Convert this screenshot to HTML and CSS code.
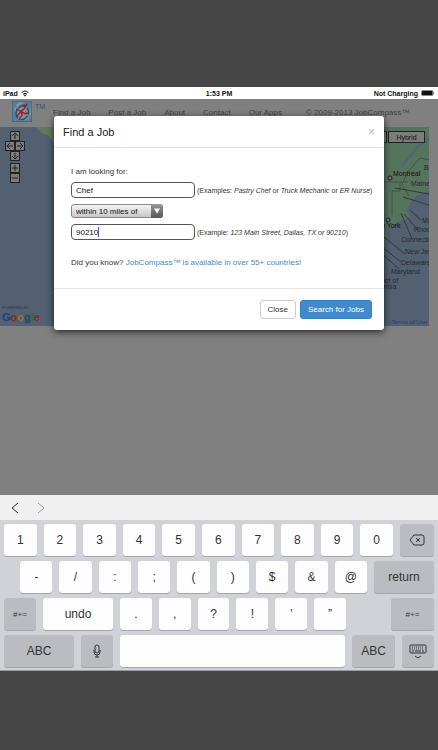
FILE: index.html
```html
<!DOCTYPE html>
<html lang="en">
<head>
    <meta charset="UTF-8">
    <meta name="viewport" content="width=device-width, initial-scale=1.0">
    <title>JobCompass - Find a Job</title>
    <link rel="stylesheet" href="styles.css">
</head>
<body>
    <div class="status-bar">
        <div class="status-left">
            <span>iPad</span>
            <svg width="8" height="7" viewBox="0 0 16 13" fill="none" stroke="#111" stroke-width="2">
                <path d="M1 5Q8-2 15 5M4 8Q8 4 12 8"/>
                <path d="M6 10L8 12L10 10Q8 8 6 10Z" fill="#111" stroke-width="1"/>
            </svg>
        </div>
        <div class="status-time">1:53 PM</div>
        <div class="status-right">
            <span>Not Charging</span>
            <svg width="14" height="6" viewBox="0 0 28 12">
                <rect x="1" y="1" width="23" height="10" rx="2" fill="none" stroke="#111"/>
                <rect x="2" y="2" width="21" height="8" rx="1" fill="#111"/>
                <path d="M25 4Q28 6 25 8Z" fill="#111"/>
            </svg>
        </div>
    </div>

    <main class="page">
        <header class="site-header">
            <a class="logo" href="#" aria-label="JobCompass">
                <svg width="20" height="21" viewBox="0 0 60 63">
                    <rect x="1" y="1" width="58" height="61" fill="#57809a" stroke="#2a6489" stroke-width="2"/>
                    <path d="M20 4H38L20 14L8 34V18ZM56 18V46L42 58H28L46 46Z" fill="#83959f"/>
                    <ellipse cx="31" cy="35" rx="18" ry="21" transform="rotate(25 31 35)" fill="#8b9499" stroke="#1e5b83" stroke-width="5"/>
                    <path d="M5 10L24 28L34 24L52 6L40 30L54 48L35 38L16 58L24 34Z" fill="#8b9499" stroke="#2a6489" stroke-width="1"/>
                    <path d="M46 8L38 22L26 32L12 48M12 24L26 30L38 38L50 36M28 31L30 43L22 52" fill="none" stroke="#a3181f" stroke-width="4"/>
                    <circle cx="37" cy="14" r="4" fill="#a3181f"/>
                </svg>
                <span>TM</span>
            </a>
            <nav class="site-nav">
                <a href="#">Find a Job</a>
                <a href="#">Post a Job</a>
                <a href="#">About</a>
                <a href="#">Contact</a>
                <a href="#">Our Apps</a>
                <span>© 2009-2013 JobCompass™</span>
            </nav>
        </header>

        <section class="map">
            <svg class="map-art" viewBox="0 0 429 199" preserveAspectRatio="xMaxYMin slice">
                <rect width="429" height="199" fill="#526071"/>
                <path d="M36 0L42 6L48 8L54 16L80 60H429V0Z" fill="#5a735f"/>
                <path d="M360 0H429V64L418 68L410 75L407 84L411 90L403 93L394 97L388 103L384 120L374 130H360Z" fill="#56735c"/>
                <path d="M36 0L42 6L48 8L54 16V0Z" fill="#66785a"/>
                <path d="M429 14L419 20L411 30L403 39L399 42L406 32L416 20L429 11Z" fill="#4f657b"/>
                <path d="M429 33L420 31L413 39L407 46L402 58L409 69M384 55H408M400 56V64H392V88" fill="none" stroke="#43544a"/>
                <path d="M395 61L429 67M403 70L429 78M410 83L421 93M404 87L418 103M401 86L412 112M375 103L405 127M372 112L401 135M372 118L399 142" fill="none" stroke="#303940"/>
                <circle cx="390" cy="51" r="2" fill="#777" stroke="#222"/>
                <circle cx="388" cy="93" r="2" fill="#777" stroke="#222"/>
                <g class="map-labels">
                    <text x="393" y="49" class="city">Montreal</text>
                    <text x="424" y="43">Bangor</text>
                    <text x="411" y="59">Maine</text>
                    <text x="371" y="101" class="city">New York</text>
                    <text x="422" y="96">Massachusetts</text>
                    <text x="414" y="105">Rhode Island</text>
                    <text x="401" y="115">Connecticut</text>
                    <text x="405" y="127">New Jersey</text>
                    <text x="401" y="138">Delaware</text>
                    <text x="391" y="147">Maryland</text>
                    <text x="369" y="156">District of</text>
                    <text x="367" y="162">Columbia</text>
                </g>
            </svg>
            <div class="pan-controls">
                <button class="pan-up" aria-label="Pan up"><svg viewBox="0 0 8 8"><path d="M4 7V1M1 4L4 1L7 4"/></svg></button>
                <button class="pan-left" aria-label="Pan left"><svg viewBox="0 0 8 8"><path d="M7 4H1M4 1L1 4L4 7"/></svg></button>
                <button class="pan-right" aria-label="Pan right"><svg viewBox="0 0 8 8"><path d="M1 4H7M4 1L7 4L4 7"/></svg></button>
                <button class="pan-down" aria-label="Pan down"><svg viewBox="0 0 8 8"><path d="M4 1V7M1 4L4 7L7 4"/></svg></button>
                <button class="zoom-in" aria-label="Zoom in"><svg viewBox="0 0 8 8"><path d="M4 1V7M1 4H7"/></svg></button>
                <button class="zoom-out" aria-label="Zoom out"><svg viewBox="0 0 8 8"><path d="M1 4H7"/></svg></button>
            </div>
            <div class="map-types">
                <button aria-label="Satellite"></button>
                <button>Hybrid</button>
            </div>
            <div class="google">
                <small>POWERED BY</small>
                <div class="google-name"><span class="g-blue">G</span><span class="g-red">o</span><span class="g-yellow">o</span><span class="g-blue">g</span><span class="g-green">l</span><span class="g-red">e</span></div>
            </div>
            <a class="terms" href="#">- Terms of Use</a>
        </section>

        <form class="modal" role="dialog" aria-labelledby="modal-title">
            <div class="modal-header">
                <h1 id="modal-title">Find a Job</h1>
                <button type="button" class="dismiss" aria-label="Dismiss">×</button>
            </div>
            <div class="modal-body">
                <label for="job">I am looking for:</label>
                <div class="field">
                    <input type="text" id="job" value="Chef">
                    <span class="hint">(Examples: <em>Pastry Chef</em> or <em>Truck Mechanic</em> or <em>ER Nurse</em>)</span>
                </div>
                <div class="select-wrap">
                    <select aria-label="Distance">
                        <option>within 10 miles of</option>
                    </select>
                    <svg class="select-arrow" viewBox="0 0 12 13"><path d="M3 4H9L6 9Z" fill="#fff"/></svg>
                </div>
                <div class="field">
                    <input type="text" aria-label="Location" value="90210">
                    <span class="caret"></span>
                    <span class="hint">(Example: <em>123 Main Street, Dallas, TX or 90210</em>)</span>
                </div>
                <p class="note">Did you know? <a href="#">JobCompass™ is available in over 55+ countries!</a></p>
            </div>
            <div class="modal-footer">
                <button type="button" class="btn">Close</button>
                <button type="button" class="btn btn-primary">Search for Jobs</button>
            </div>
        </form>
    </main>

    <section class="keyboard">
        <div class="key-toolbar">
            <button aria-label="Previous field"><svg width="8" height="12" viewBox="0 0 8 12"><path d="M7 1L1 6L7 11"/></svg></button>
            <button class="disabled" aria-label="Next field"><svg width="8" height="12" viewBox="0 0 8 12"><path d="M1 1L7 6L1 11"/></svg></button>
        </div>
        <div class="keys">
            <div class="key-row">
                <button class="key">1</button>
                <button class="key">2</button>
                <button class="key">3</button>
                <button class="key">4</button>
                <button class="key">5</button>
                <button class="key">6</button>
                <button class="key">7</button>
                <button class="key">8</button>
                <button class="key">9</button>
                <button class="key">0</button>
                <button class="key dark w-delete" aria-label="Delete">
                    <svg width="16" height="12" viewBox="0 0 16 12" fill="none" stroke="#333"><path d="M5 1H13Q15 1 15 3V9Q15 11 13 11H5L1 6ZM7 4L11 8M11 4L7 8"/></svg>
                </button>
            </div>
            <div class="key-row indent">
                <button class="key">-</button>
                <button class="key">/</button>
                <button class="key">:</button>
                <button class="key">;</button>
                <button class="key">(</button>
                <button class="key">)</button>
                <button class="key">$</button>
                <button class="key">&amp;</button>
                <button class="key">@</button>
                <button class="key dark w-return">return</button>
            </div>
            <div class="key-row">
                <button class="key dark small w-one">#+=</button>
                <button class="key w-wide">undo</button>
                <button class="key">.</button>
                <button class="key">,</button>
                <button class="key">?</button>
                <button class="key">!</button>
                <button class="key">’</button>
                <button class="key">”</button>
                <button class="key dark small w-mid push">#+=</button>
            </div>
            <div class="key-row">
                <button class="key dark w-wide">ABC</button>
                <button class="key dark w-one" aria-label="Dictate">
                    <svg width="8" height="14" viewBox="0 0 8 14" fill="none" stroke="#333"><rect x="2" y="1" width="4" height="8" rx="2"/><path d="M1 6V8Q1 11 4 11Q7 11 7 8V6M4 11V13M2 13H6"/></svg>
                </button>
                <button class="key" aria-label="Space"></button>
                <button class="key dark w-mid">ABC</button>
                <button class="key dark w-one" aria-label="Hide keyboard">
                    <svg width="18" height="16" viewBox="0 0 18 16" fill="none" stroke="#333"><rect x="1" y="2" width="16" height="8" rx="1"/><path d="M3 4H15M3 6H15" stroke-dasharray="1 1"/><path d="M3 8H5M6 8H12M13 8H15M6 13L9 15L12 13"/></svg>
                </button>
            </div>
        </div>
    </section>
</body>
</html>
```

FILE: styles.css
```css
* {
    box-sizing: border-box;
}
body {
    margin: 0;
    padding: 87px 0 79px;
    background-color: #464646;
    font-family: "Liberation Sans", Arial, sans-serif;
    font-size: 8px;
    color: #333;
}
button, input, select {
    margin: 0;
    padding: 0;
    font: inherit;
    color: inherit;
}
a {
    text-decoration: none;
}

/* Status bar */
.status-bar {
    display: grid;
    grid-template-columns: 1fr auto 1fr;
    align-items: center;
    height: 12px;
    padding: 0 3px;
    background-color: #fff;
    color: #111;
    font-size: 7px;
    font-weight: bold;
}
.status-left, .status-right {
    display: flex;
    align-items: center;
    gap: 3px;
}
.status-right {
    justify-content: flex-end;
}

/* Page behind the dialog */
.page {
    position: relative;
    height: 396px;
    padding-right: 9px;
    background-color: #808080;
}
.site-header {
    display: flex;
    height: 28px;
    padding: 2px 0 0 12px;
}
.logo {
    display: flex;
    gap: 3px;
    width: 41px;
    color: #2b526c;
}
.logo span {
    padding-top: 2px;
    font-size: 7px;
}
.site-nav {
    display: flex;
    gap: 18px;
    padding-top: 7px;
    color: #404040;
    white-space: nowrap;
}
.site-nav a {
    color: inherit;
}
.site-nav span {
    padding-left: 6px;
}
.map {
    position: relative;
    height: 199px;
    overflow: hidden;
    background-color: #526071;
}
.map-art {
    display: block;
    width: 100%;
    height: 100%;
}
.map-labels {
    font-size: 7px;
    fill: #26292c;
}
.map-labels .city {
    fill: #111;
}
.pan-controls {
    position: absolute;
    left: 5px;
    top: 4px;
    display: grid;
    grid-template-columns: repeat(4, 5px);
    grid-template-rows: 10px 10px 12px 10px 10px;
    row-gap: 0;
}
.pan-controls button {
    width: 10px;
    height: 10px;
    border: 1px solid #222;
    background-color: #7c7c7c;
}
.pan-controls svg {
    display: block;
    width: 8px;
    height: 8px;
    fill: none;
    stroke: #222;
}
.pan-up, .pan-down, .zoom-in, .zoom-out {
    grid-column: 2 / 4;
}
.pan-left {
    grid-column: 1 / 3;
    grid-row: 2;
}
.pan-right {
    grid-column: 3 / 5;
    grid-row: 2;
}
.map-types {
    position: absolute;
    top: 4px;
    right: 4px;
    display: flex;
    gap: 1px;
}
.map-types button {
    width: 37px;
    height: 12px;
    border: 1px solid #222;
    background-color: #7d7d7d;
    color: #111;
    font-size: 7px;
}
.google {
    position: absolute;
    left: 2px;
    bottom: 2px;
}
.google small {
    display: block;
    font-size: 4px;
    line-height: 5px;
    color: #30363d;
}
.google-name {
    font-size: 11px;
    font-weight: bold;
    line-height: 14px;
}
.g-blue {
    color: #203f83;
}
.g-red {
    color: #8c2529;
}
.g-yellow {
    color: #8f7922;
}
.g-green {
    color: #28713a;
}
.terms {
    position: absolute;
    right: 2px;
    bottom: 1px;
    color: #303b73;
    font-size: 6px;
}

/* Dialog */
.modal {
    position: absolute;
    top: 17px;
    left: 54px;
    right: 54px;
    border-radius: 3px;
    background-color: #fff;
    box-shadow: 0 2px 7px rgba(0, 0, 0, 0.7);
}
.modal-header {
    display: flex;
    align-items: center;
    justify-content: space-between;
    height: 32px;
    padding: 0 9px;
    border-bottom: 1px solid #e5e5e5;
}
.modal-header h1 {
    margin: 0;
    font-size: 11px;
    font-weight: normal;
    color: #222;
}
.dismiss {
    border: none;
    background: none;
    color: #bbb;
    font-size: 12px;
}
.modal-body {
    padding: 19px 17px 20px;
}
.modal-body label {
    display: block;
    height: 15px;
    line-height: 10px;
}
.field {
    position: relative;
    display: flex;
    align-items: center;
    gap: 2px;
}
.field input {
    flex: none;
    width: 124px;
    height: 16px;
    padding: 0 4px;
    border: 1px solid #555;
    border-radius: 4px;
    background-color: #fff;
    color: #111;
}
.caret {
    position: absolute;
    left: 27px;
    top: 3px;
    width: 1px;
    height: 10px;
    background-color: #3b62d8;
}
.hint {
    font-size: 7px;
    white-space: nowrap;
}
.select-wrap {
    position: relative;
    width: 92px;
    height: 14px;
    margin: 6px 0;
}
.select-wrap select {
    display: block;
    width: 100%;
    height: 100%;
    padding: 0 4px;
    border: 1px solid #888;
    border-radius: 3px;
    appearance: none;
    background: linear-gradient(#f4f4f4, #c8c8c8);
    color: #111;
}
.select-arrow {
    position: absolute;
    top: 0;
    right: 0;
    width: 12px;
    height: 14px;
    border-radius: 0 3px 3px 0;
    background: linear-gradient(#999, #555);
    pointer-events: none;
}
.note {
    margin: 18px 0 0;
    line-height: 10px;
}
.note a {
    color: #428bca;
}
.modal-footer {
    display: flex;
    justify-content: flex-end;
    gap: 4px;
    padding: 11px 12px;
    border-top: 1px solid #e5e5e5;
}
.btn {
    height: 19px;
    padding: 0 7px;
    border: 1px solid #ccc;
    border-radius: 3px;
    background-color: #fff;
}
.btn-primary {
    border-color: #357ebd;
    background-color: #428bca;
    color: #fff;
}

/* Keyboard */
.key-toolbar {
    display: flex;
    align-items: center;
    gap: 18px;
    height: 25px;
    padding: 0 11px;
    background-color: #f0f0f0;
}
.key-toolbar button {
    display: flex;
    border: none;
    background: none;
}
.key-toolbar path {
    fill: none;
    stroke: #222;
}
.key-toolbar .disabled path {
    stroke: #999;
}
.keys {
    display: flex;
    flex-direction: column;
    gap: 5px;
    padding: 4px 4px 3px;
    border-bottom: 1px solid #9b9ca0;
    background-color: #d0d2d8;
}
.key-row {
    display: flex;
    gap: 7px;
}
.indent {
    padding-left: 16px;
}
.key {
    display: flex;
    flex: 1;
    align-items: center;
    justify-content: center;
    min-width: 0;
    height: 32px;
    border: none;
    border-radius: 3px;
    background-color: #fdfdfd;
    box-shadow: 0 1px 0 #a5a7ab;
    font-size: 12px;
}
.dark {
    background-color: #babcc2;
}
.small {
    font-size: 8px;
}
.w-one {
    flex: 0 0 32px;
}
.w-delete {
    flex: 0 0 34px;
}
.w-mid {
    flex: 0 0 43px;
}
.w-return {
    flex: 0 0 60px;
}
.w-wide {
    flex: 0 0 70px;
}
.push {
    margin-left: 38px;
}
```
